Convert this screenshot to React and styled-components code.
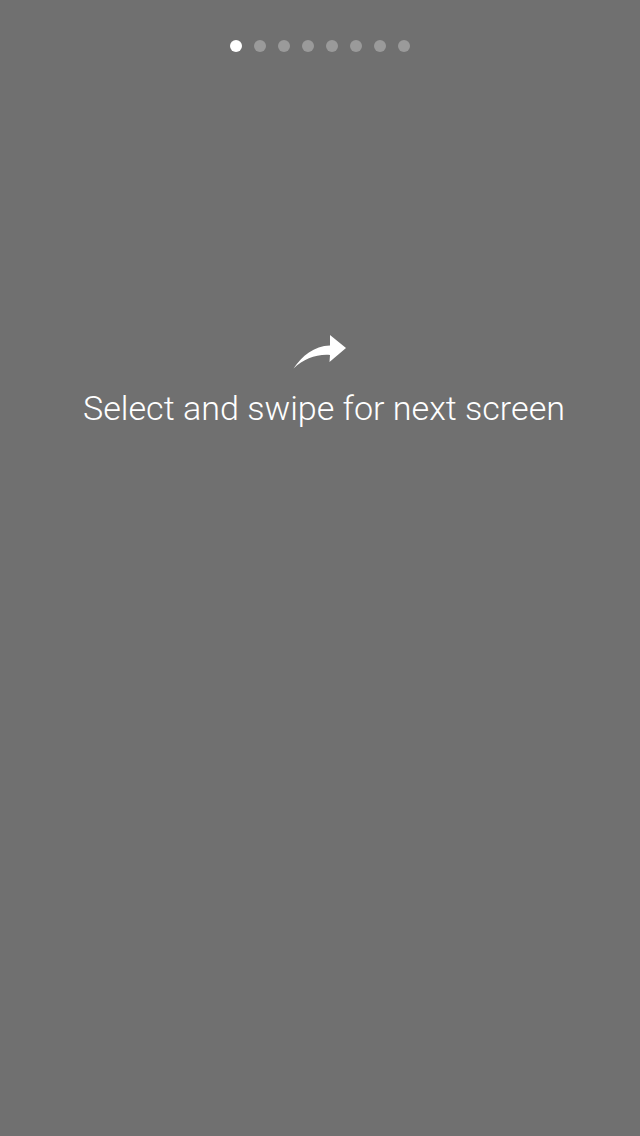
import React from "react";
import styled, { createGlobalStyle } from "styled-components";

const Global = createGlobalStyle`
  html, body { margin: 0; padding: 0; background: #707070; }
  body { font-family: Roboto, "Noto Sans", sans-serif; }
`;

const Page = styled.div`
  width: 640px;
  height: 1136px;
  background: #707070;
  display: flex;
  flex-direction: column;
  align-items: center;
  overflow: hidden;
`;

const Dots = styled.div`
  display: flex;
  gap: 12px;
  padding-top: 40px;
`;

const Dot = styled.span`
  width: 12px;
  height: 12px;
  border-radius: 50%;
  background: ${(p) => (p.$active ? "#ffffff" : "#9a9a9a")};
`;

const Hint = styled.div`
  margin-top: 280px;
  display: flex;
  flex-direction: column;
  align-items: center;
`;

const Arrow = styled.svg`
  width: 60px;
  height: 40px;
  display: block;
`;

const Label = styled.div`
  margin-top: 16px;
  margin-left: 8px;
  color: #ffffff;
  font-family: Roboto, sans-serif;
  font-weight: 300;
  font-size: 34.1px;
  line-height: 40px;
  white-space: nowrap;
`;

export default function App() {
  return (
    <>
      <Global />
      <Page>
        <Dots>
          {Array.from({ length: 8 }).map((_, i) => (
            <Dot key={i} $active={i === 0} />
          ))}
        </Dots>
        <Hint>
          <Arrow viewBox="0 0 60 40">
            <path
              d="M3.5,36.5 C12,24 24,14 40,13.5 L40,3 L56,16 L39.5,30 L40,23 C26,22 14,27 3.5,36.5 Z"
              fill="#ffffff"
            />
          </Arrow>
          <Label>Select and swipe for next screen</Label>
        </Hint>
      </Page>
    </>
  );
}
